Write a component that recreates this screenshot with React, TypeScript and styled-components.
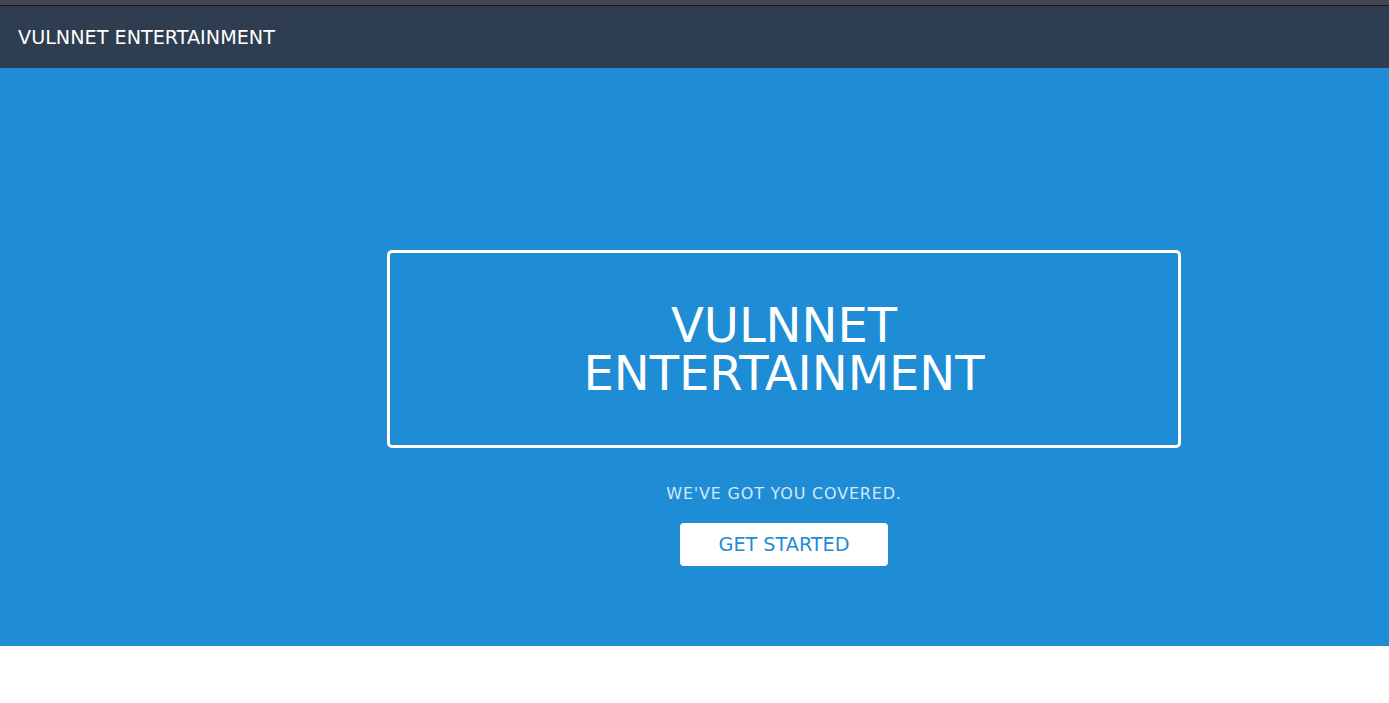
import React from "react";
import styled, { createGlobalStyle } from "styled-components";

const GlobalStyle = createGlobalStyle`
  html, body {
    margin: 0;
    padding: 0;
    background: #fff;
    font-family: "DejaVu Sans", "Liberation Sans", sans-serif;
  }
`;

const App = () => {
  return (
    <>
      <GlobalStyle />
      <Page>
        <TopStrip />
        <Header>
          <Brand>VULNNET ENTERTAINMENT</Brand>
        </Header>
        <Splash>
          <SplashColumn>
            <SplashHead>VULNNET ENTERTAINMENT</SplashHead>
            <SplashSubhead>We've got you covered.</SplashSubhead>
            <PrimaryButton href="#">Get Started</PrimaryButton>
          </SplashColumn>
        </Splash>
      </Page>
    </>
  );
};

const Page = styled("div")`
  display: flex;
  flex-direction: column;
  min-height: 703px;
`;

const TopStrip = styled("div")`
  height: 5px;
  background: #46464e;
  border-bottom: 1px solid #121519;
`;

const Header = styled("header")`
  height: 62px;
  display: flex;
  align-items: center;
  padding-left: 18px;
  background: #2e3e50;
`;

const Brand = styled("span")`
  color: #fff;
  font-size: 19.2px;
  font-weight: 400;
`;

const Splash = styled("section")`
  height: 578px;
  background: #1f8dd6;
  display: flex;
  justify-content: center;
  padding-left: 179px;
  box-sizing: border-box;
`;

const SplashColumn = styled("div")`
  display: flex;
  flex-direction: column;
  align-items: center;
  padding-top: 182px;
  text-transform: uppercase;
  text-align: center;
`;

const SplashHead = styled("h1")`
  margin: 0;
  width: 794px;
  box-sizing: border-box;
  padding: 48px 180px;
  border: 3px solid #fff;
  border-radius: 5px;
  color: #fff;
  font-size: 48px;
  font-weight: 400;
  line-height: 48px;
`;

const SplashSubhead = styled("p")`
  margin: 34px 0 0;
  color: #fff;
  opacity: 0.8;
  font-size: 16px;
  line-height: 24px;
  letter-spacing: 0.05em;
`;

const PrimaryButton = styled("a")`
  margin-top: 17px;
  width: 208px;
  height: 43px;
  box-sizing: border-box;
  padding-bottom: 1px;
  display: flex;
  align-items: center;
  justify-content: center;
  background: #fff;
  border-radius: 4px;
  color: #1f8dd6;
  font-size: 19.2px;
  text-decoration: none;
`;

export default App;
